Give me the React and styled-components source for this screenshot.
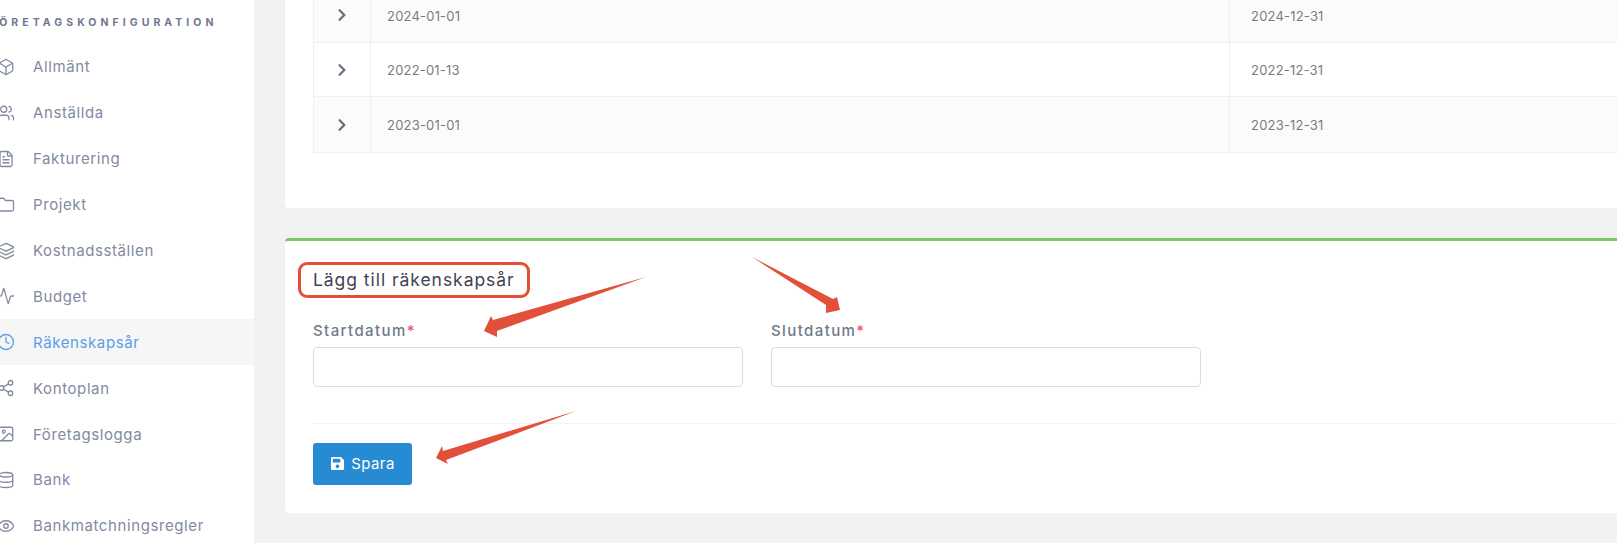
import React from 'react';
import styled, { createGlobalStyle } from 'styled-components';
import { Box, Users, FileText, Folder, Layers, Activity, Clock, Share2, Image, Database, Eye } from 'lucide-react';
import { FaChevronRight, FaSave } from 'react-icons/fa';

const GlobalStyle = createGlobalStyle`
  html, body { margin: 0; padding: 0; background: #f2f2f2; }
  body { font-family: Inter, "Open Sans", "Liberation Sans", sans-serif; }
  * { box-sizing: border-box; }
`;

const navItems = [
    { label: 'Allmänt', icon: Box },
    { label: 'Anställda', icon: Users },
    { label: 'Fakturering', icon: FileText },
    { label: 'Projekt', icon: Folder },
    { label: 'Kostnadsställen', icon: Layers },
    { label: 'Budget', icon: Activity },
    { label: 'Räkenskapsår', icon: Clock, active: true },
    { label: 'Kontoplan', icon: Share2 },
    { label: 'Företagslogga', icon: Image },
    { label: 'Bank', icon: Database },
    { label: 'Bankmatchningsregler', icon: Eye },
];

const years = [
    { start: '2024-01-01', end: '2024-12-31' },
    { start: '2022-01-13', end: '2022-12-31' },
    { start: '2023-01-01', end: '2023-12-31' },
];

export default function App() {
    return (
        <>
        <GlobalStyle />
        <Viewport>
            <Sidebar>
                <SideHeading>FÖRETAGSKONFIGURATION</SideHeading>
                {navItems.map(({ label, icon: Icon, active }) => (
                    <NavItem key={label} $active={active}>
                        <Icon size={18} strokeWidth={1.7} />
                        <span>{label}</span>
                    </NavItem>
                ))}
            </Sidebar>
            <Main>
                <TableCard>
                    <Table>
                        {years.map((year, i) => (
                            <Row key={year.start} $odd={i % 2 === 0}>
                                <ToggleCell><FaChevronRight size={14} /></ToggleCell>
                                <DateCell>{year.start}</DateCell>
                                <DateCell>{year.end}</DateCell>
                            </Row>
                        ))}
                    </Table>
                </TableCard>
                <FormCard>
                    <Title>
                        Lägg till räkenskapsår
                        <TitleMark />
                    </Title>
                    <Fields>
                        <Field>
                            <FieldLabel>Startdatum<Required>*</Required></FieldLabel>
                            <Input type="text" />
                        </Field>
                        <Field>
                            <FieldLabel>Slutdatum<Required>*</Required></FieldLabel>
                            <Input type="text" />
                        </Field>
                    </Fields>
                    <Footer>
                        <SaveButton type="button"><FaSave size={15} />Spara</SaveButton>
                    </Footer>
                </FormCard>
            </Main>
            <Arrows viewBox="0 0 1617 543">
                <polygon points="646,277 493,320 491,316 484,331 497,337 497,331" />
                <polygon points="752,257 826,305 826,313 840,310 837,297 833,299" />
                <polygon points="576,411 443,451 442,446 436,458 448,464 446,460" />
            </Arrows>
        </Viewport>
        </>
    );
}

const Viewport = styled.div`
position: relative;
display: flex;
width: 100vw;
height: 543px;
overflow: hidden;
background: #f2f2f2;
`;

const Sidebar = styled.aside`
flex: 0 0 264px;
margin-left: -10px;
padding-top: 14px;
background: #fff;
`;

const SideHeading = styled.div`
height: 18px;
margin-bottom: 12px;
margin-left: -1px;
font-size: 10.5px;
line-height: 18px;
font-weight: 700;
letter-spacing: 4.05px;
white-space: nowrap;
color: #6f7890;
`;

const NavItem = styled.div`
display: flex;
align-items: center;
gap: 18px;
height: 45.9px;
padding-left: 7px;
font-size: 15px;
letter-spacing: 0.6px;
white-space: nowrap;
color: ${p => (p.$active ? '#5a9fe8' : '#828a9f')};
background: ${p => (p.$active ? '#f6f6f7' : 'transparent')};
`;

const Main = styled.main`
flex: 1;
min-width: 0;
margin-top: -12px;
padding-left: 31px;
`;

const TableCard = styled.section`
padding: 0 0 55px 28px;
background: #fff;
border-radius: 0 0 0 4px;
`;

const Table = styled.div`
border-left: 1px solid #f0f0f0;
border-bottom: 1px solid #f0f0f0;
`;

const Row = styled.div`
display: grid;
grid-template-columns: 57px 859px 1fr;
height: 54.6px;
background: ${p => (p.$odd ? '#fbfbfb' : '#fff')};
border-bottom: 1px solid #f0f0f0;
&:last-child { border-bottom: 0; }
`;

const ToggleCell = styled.div`
display: flex;
align-items: center;
justify-content: center;
padding-top: 1px;
border-right: 1px solid #f0f0f0;
color: #667080;
`;

const DateCell = styled.div`
display: flex;
align-items: center;
padding: 2px 0 0 16px;
font-size: 13px;
letter-spacing: 0.2px;
color: #7b7b80;
border-right: 1px solid #f0f0f0;
&:last-child { padding-left: 21px; border-right: 0; }
`;

const FormCard = styled.section`
height: 275px;
margin-top: 30px;
padding: 27px 0 0 28px;
background: #fff;
border-top: 3px solid #78c95e;
border-radius: 4px 0 0 4px;
`;

const Title = styled.h3`
position: relative;
display: inline-block;
margin: 0;
font-size: 17.5px;
line-height: 24px;
font-weight: 400;
letter-spacing: 0.95px;
color: #3f4254;
`;

const TitleMark = styled.span`
position: absolute;
top: -6px;
bottom: -6px;
left: -15px;
right: -15px;
border: 3px solid #e2503a;
border-radius: 9px;
`;

const Fields = styled.div`
display: flex;
gap: 28px;
margin-top: 25px;
`;

const Field = styled.div`
display: flex;
flex-direction: column;
width: 430px;
`;

const FieldLabel = styled.label`
height: 30px;
font-size: 15px;
line-height: 27px;
font-weight: 500;
letter-spacing: 1.4px;
color: #6f7a8a;
`;

const Required = styled.span`
color: #f1556c;
`;

const Input = styled.input`
height: 40px;
padding: 0 12px;
background: #fff;
border: 1px solid #d9dde3;
border-radius: 4px;
outline: none;
`;

const Footer = styled.div`
margin-top: 36px;
padding-top: 19px;
border-top: 1px solid #f3f3f3;
`;

const SaveButton = styled.button`
display: inline-flex;
align-items: center;
justify-content: center;
gap: 6px;
width: 99px;
height: 42px;
padding: 0;
font-family: inherit;
font-size: 15px;
font-weight: 400;
letter-spacing: 0.4px;
color: #fff;
background: #268bd2;
border: 0;
border-radius: 3px;
`;

const Arrows = styled.svg`
position: absolute;
top: 0;
left: 0;
width: 1617px;
height: 543px;
pointer-events: none;
fill: #e2503a;
`;
